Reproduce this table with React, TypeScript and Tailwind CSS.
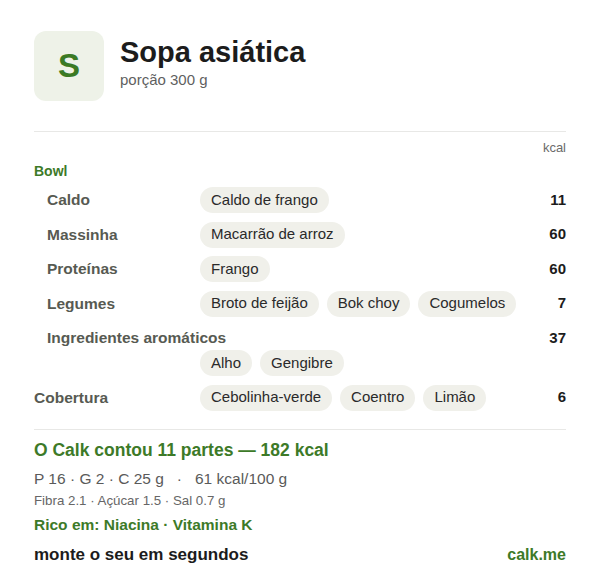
const font = { fontFamily: '"Liberation Sans", Arial, Helvetica, sans-serif' };

type Row = { label: string; items: string[]; kcal: number; indent?: boolean; wrap?: boolean };

const rows: Row[] = [
  { label: 'Caldo', items: ['Caldo de frango'], kcal: 11, indent: true },
  { label: 'Massinha', items: ['Macarrão de arroz'], kcal: 60, indent: true },
  { label: 'Proteínas', items: ['Frango'], kcal: 60, indent: true },
  { label: 'Legumes', items: ['Broto de feijão', 'Bok choy', 'Cogumelos'], kcal: 7, indent: true },
  { label: 'Ingredientes aromáticos', items: ['Alho', 'Gengibre'], kcal: 37, indent: true, wrap: true },
  { label: 'Cobertura', items: ['Cebolinha-verde', 'Coentro', 'Limão'], kcal: 6 },
];

function Chip({ children }: { children: string }) {
  return (
    <span className="flex h-[26px] items-center rounded-full bg-[#f0f0ea] px-[11px] text-[15px] text-[#2a2a2a]">
      {children}
    </span>
  );
}

function IngredientRow({ row }: { row: Row }) {
  const label = (
    <span className={`text-[15.5px] font-bold text-[#575a52] ${row.indent ? 'pl-[13px]' : ''}`}>{row.label}</span>
  );
  const kcal = <span className="text-[15px] font-bold text-[#1c1c1c]">{row.kcal}</span>;

  if (row.wrap) {
    return (
      <div className="flex flex-col">
        <div className="flex h-[26px] items-center justify-between">
          {label}
          {kcal}
        </div>
        <div className="-mt-[1px] flex gap-2 pl-[166px]">
          {row.items.map((i) => (
            <Chip key={i}>{i}</Chip>
          ))}
        </div>
      </div>
    );
  }

  return (
    <div className="flex h-[26px] items-center">
      <div className="w-[166px] shrink-0">{label}</div>
      <div className="flex flex-1 gap-2">
        {row.items.map((i) => (
          <Chip key={i}>{i}</Chip>
        ))}
      </div>
      {kcal}
    </div>
  );
}

export default function App() {
  return (
    <div className="min-h-[577px] w-[600px] bg-white px-[34px] pt-[31px]" style={font}>
      <div className="flex gap-4">
        <div className="flex h-[70px] w-[70px] items-center justify-center rounded-[12px] bg-[#eef2e8] text-[33px] font-bold text-[#3b7a24]">
          S
        </div>
        <div className="flex flex-col">
          <h1 className="mt-[4px] text-[29px] leading-[34px] font-bold text-[#1c1c1c]">Sopa asiática</h1>
          <p className="mt-[1px] text-[15px] leading-[20px] text-[#5f5f5f]">porção 300 g</p>
        </div>
      </div>

      <div className="mt-[30px] border-t border-[#e8e8e6]" />

      <div className="mt-[8px] text-right text-[13px] leading-[16px] text-[#6b6b6b]">kcal</div>
      <div className="mt-[5px] text-[14px] leading-[20px] font-bold text-[#3d7a28]">Bowl</div>

      <div className="mt-[6px] flex flex-col gap-[8.5px]">
        {rows.map((r) => (
          <IngredientRow key={r.label} row={r} />
        ))}
      </div>

      <div className="mt-[18px] border-t border-[#e8e8e6]" />

      <div className="mt-[8px] text-[17.5px] leading-[24px] font-bold text-[#3d7a28]">
        O Calk contou 11 partes — 182 kcal
      </div>
      <div className="mt-[6px] text-[15.5px] leading-[22px] text-[#5a5a5a]">
        P 16 · G 2 · C 25 g<span className="px-[13px]">·</span>61 kcal/100 g
      </div>
      <div className="mt-[2px] text-[13.3px] leading-[18px] text-[#666666]">Fibra 2.1 · Açúcar 1.5 · Sal 0.7 g</div>
      <div className="mt-[4px] text-[15.5px] leading-[22px] font-bold text-[#3d7a28]">Rico em: Niacina · Vitamina K</div>
      <div className="mt-[7px] flex items-center justify-between leading-[24px] font-bold">
        <span className="text-[17px] text-[#1c1c1c]">monte o seu em segundos</span>
        <span className="text-[16px] text-[#3d7a28]">calk.me</span>
      </div>
    </div>
  );
}
